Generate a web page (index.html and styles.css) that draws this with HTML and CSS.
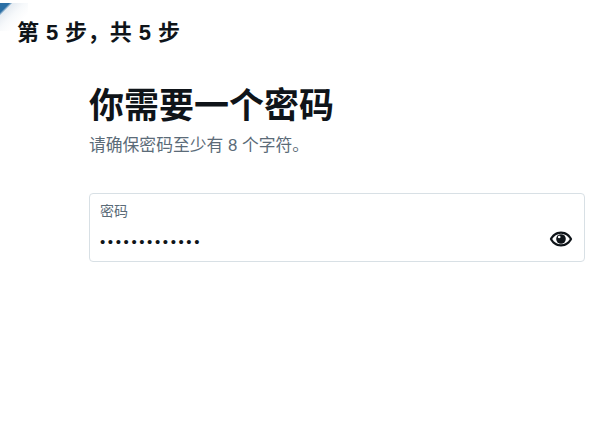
FILE: index.html
```html
<!DOCTYPE html>
<html lang="zh-CN">
<head>
    <meta charset="UTF-8">
    <title>第 5 步，共 5 步</title>
    <link rel="stylesheet" href="styles.css">
</head>
<body>
    <div class="corner"></div>
    <div class="modal">
        <header class="step">第 5 步，共 5 步</header>
        <main class="content">
            <h1 class="title">你需要一个密码</h1>
            <p class="hint">请确保密码至少有 8 个字符。</p>
            <label class="field">
                <span class="field-text">
                    <span class="field-label">密码</span>
                    <input class="field-input" type="password" value="1234567890123">
                </span>
                <svg class="eye" viewBox="0 0 24 24" aria-hidden="true">
                    <path d="M12 4.500C6.600 4.500 2.600 8 .8 12c1.800 4 5.800 7.500 11.200 7.500S21.400 16 23.200 12c-1.800-4-5.800-7.500-11.200-7.500zm0 12.800c-3.900 0-7-2.200-8.800-5.300C5 8.900 8.100 6.700 12 6.700s7 2.200 8.800 5.300c-1.800 3.100-4.900 5.300-8.800 5.300z"/>
                    <circle cx="12" cy="12" r="4.800"/>
                    <circle cx="10.200" cy="10" r="1.300" fill="#fff"/>
                </svg>
            </label>
        </main>
    </div>
</body>
</html>
```

FILE: styles.css
```css
* {
    box-sizing: border-box;
}

body {
    margin: 0;
    background: #fff;
    color: #0f1419;
    font-family: "Liberation Sans", "Noto Sans CJK SC", sans-serif;
}

.corner {
    position: absolute;
    top: 3px;
    left: 0;
    width: 28px;
    height: 28px;
    background: linear-gradient(135deg, #2a6fa5 0, #2a6fa5 17%, #e6ecf2 23%, #f7f9fb 45%, #fff 70%);
}

.modal {
    position: relative;
    width: 611px;
    height: 424px;
}

.step {
    height: 85px;
    padding: 21px 0 0 17px;
    font-size: 22px;
    line-height: 24px;
    font-weight: 700;
    letter-spacing: .4px;
}

.content {
    padding: 0 26px 0 89px;
}

.title {
    margin: 0;
    font-size: 35px;
    line-height: 42px;
    font-weight: 700;
}

.hint {
    margin: 9px 0 0;
    font-size: 16.800px;
    line-height: 20px;
    color: #5b6b78;
}

.field {
    display: flex;
    align-items: flex-start;
    justify-content: space-between;
    height: 69px;
    margin-top: 37px;
    padding: 8px 11px 0 10px;
    border: 1px solid #d8e0e5;
    border-radius: 4px;
}

.field-text {
    display: flex;
    flex-direction: column;
}

.field-label {
    font-size: 14px;
    line-height: 18px;
    color: #5b6b78;
}

.field-input {
    width: 300px;
    margin-top: 11px;
    padding: 0;
    border: 0;
    outline: 0;
    font-family: inherit;
    font-size: 15px;
    line-height: 22px;
    letter-spacing: 2.600px;
    color: #0f1419;
}

.eye {
    width: 24px;
    height: 24px;
    margin-top: 25px;
    fill: #0f1419;
}
```
